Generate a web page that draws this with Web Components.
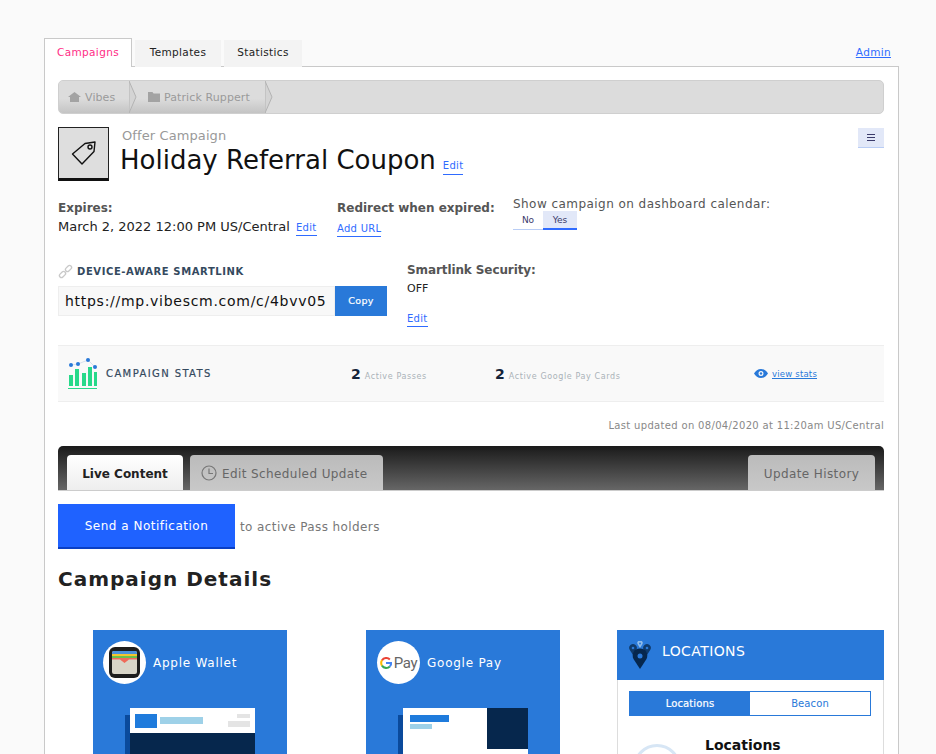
<!DOCTYPE html>
<html lang="en">
<head>
<meta charset="utf-8">
<title>Holiday Referral Coupon</title>
<style>
    html, body { margin: 0; height: 754px; overflow: hidden; }
    body { background: #fafafa; font-family: "DejaVu Sans", Verdana, sans-serif; color: #222; }
</style>
</head>
<body>
<vb-page>
    <vb-nav slot="nav"></vb-nav>
    <vb-breadcrumb></vb-breadcrumb>
    <vb-campaign-head title-text="Holiday Referral Coupon" kind="Offer Campaign"></vb-campaign-head>
    <vb-meta></vb-meta>
    <vb-smartlink></vb-smartlink>
    <vb-stats></vb-stats>
    <vb-updated>Last updated on 08/04/2020 at 11:20am US/Central</vb-updated>
    <vb-content-tabs></vb-content-tabs>
    <vb-notify></vb-notify>
    <vb-details>
        <vb-pass-card kind="apple" label="Apple Wallet"></vb-pass-card>
        <vb-pass-card kind="google" label="Google Pay"></vb-pass-card>
        <vb-locations></vb-locations>
    </vb-details>
</vb-page>

<script>
// small helper, every element has the same shadow setup
class VbBase extends HTMLElement {
    constructor() {
        super();
        this.attachShadow({ mode: 'open' });
    }
    connectedCallback() {
        this.render();
    }
}

const linkStyle = /* css */`
    .edit { color: #2f6bff; font-size: 10px; letter-spacing: .3px; text-decoration: none; border-bottom: 1px solid #2f6bff; padding-bottom: 2px; }
`;

class VbPage extends VbBase {
    render() {
        this.shadowRoot.innerHTML = /* html */`
        <style>
            :host { display: block; padding: 38px 37px 0 44px; }
            .panel { border: 1px solid #c9c9c9; background: #fff; padding: 13px 14px 0 13px; height: 700px; margin-top: -1px; box-sizing: border-box; width: 855px; }
        </style>
        <slot name="nav"></slot>
        <div class="panel"><slot></slot></div>
        `;
    }
}

class VbNav extends VbBase {
    render() {
        this.shadowRoot.innerHTML = /* html */`
        <style>
            :host { display: flex; align-items: flex-end; height: 29px; font-size: 10.500px; letter-spacing: .35px; position: relative; z-index: 1; }
            .tab { height: 27px; line-height: 25px; background: #f3f3f3; color: #222; text-align: center; box-sizing: border-box; }
            .on { height: 29px; line-height: 27px; width: 88px; background: #fff; color: #ff2d86; border: 1px solid #c9c9c9; border-bottom: 0; margin-right: 3px; }
            .t2 { width: 86px; margin-right: 3px; }
            .t3 { width: 78px; }
            a { margin-left: auto; margin-right: 8px; margin-bottom: 2px; align-self: center; color: #2f6bff; text-decoration: underline; }
        </style>
        <div class="tab on">Campaigns</div>
        <div class="tab t2">Templates</div>
        <div class="tab t3">Statistics</div>
        <a>Admin</a>
        `;
    }
}

class VbBreadcrumb extends VbBase {
    render() {
        this.shadowRoot.innerHTML = /* html */`
        <style>
            :host { display: flex; height: 34px; box-sizing: border-box; background: #dcdcdc; border: 1px solid #cfcfcf; border-radius: 5px; font-size: 11px; letter-spacing: .1px; color: #9a9a9a; overflow: hidden; }
            .crumb { position: relative; display: flex; align-items: center; gap: 4px; height: 100%; background: linear-gradient(#dcdcdc 55%, #c4c4c4); }
            .home { width: 71px; padding-left: 9px; box-sizing: border-box; }
            .folder { width: 136px; padding-left: 18px; box-sizing: border-box; }
            svg.arrow { position: absolute; right: -7px; top: 0; z-index: 1; }
            .crumb svg.i { flex: none; }
        </style>
        <div class="crumb home">
            <svg class="i" width="13" height="10" viewBox="0 0 13 10"><path fill="#a3a3a3" d="M6.500 0 13 5H11V10H2V5H0Z"/></svg>
            <span>Vibes</span>
            <svg class="arrow" width="8" height="32" viewBox="0 0 8 32"><path d="M0 0 7 16 0 32Z" fill="#d4d4d4" stroke="#b3b3b3"/></svg>
        </div>
        <div class="crumb folder">
            <svg class="i" width="12" height="10" viewBox="0 0 12 10"><path fill="#a3a3a3" d="M0 0H4.500L5.500 1.500H12V10H0Z"/></svg>
            <span>Patrick Ruppert</span>
            <svg class="arrow" width="8" height="32" viewBox="0 0 8 32"><path d="M0 0 7 16 0 32Z" fill="#d4d4d4" stroke="#b3b3b3"/></svg>
        </div>
        `;
    }
}

class VbCampaignHead extends VbBase {
    render() {
        this.shadowRoot.innerHTML = /* html */`
        <style>
            ${linkStyle}
            :host { display: flex; margin-top: 13px; height: 54px; }
            .box { width: 51px; height: 54px; box-sizing: border-box; background: #dedede; border: 1px solid #222; border-bottom: 3px solid #111; display: flex; align-items: center; justify-content: center; }
            .text { margin-left: 11px; }
            .kind { font-size: 13px; letter-spacing: .1px; color: #999; line-height: 16px; margin: 1px 0 0 2px; }
            .title { display: flex; align-items: baseline; line-height: 32px; }
            h1 { margin: 0; font-size: 26px; font-weight: 400; color: #111; }
            .edit { margin-left: 7px; line-height: 12px; }
            .menu { margin-left: auto; width: 26px; height: 19px; margin-top: 1px; background: #e2e8f8; border-bottom: 1px solid #b9cdf5; display: flex; align-items: center; justify-content: center; }
        </style>
        <div class="box">
            <svg width="26" height="26" viewBox="0 0 26 26" fill="none" stroke="#111" stroke-width="1.400" stroke-linejoin="round"><path d="M1.500 14 14 3.500 24 2 23 11.500 11 24Z"/><circle cx="19" cy="7" r="2"/></svg>
        </div>
        <div class="text">
            <div class="kind">${this.getAttribute('kind')}</div>
            <div class="title"><h1>${this.getAttribute('title-text')}</h1><a class="edit">Edit</a></div>
        </div>
        <div class="menu">
            <svg width="8" height="7" viewBox="0 0 8 7"><path d="M0 .5H8M0 3.500H8M0 6.500H8" stroke="#3a3a6a"/></svg>
        </div>
        `;
    }
}

class VbMeta extends VbBase {
    render() {
        this.shadowRoot.innerHTML = /* html */`
        <style>
            ${linkStyle}
            :host { display: grid; grid-template-columns: 279px 176px 1fr; margin-top: 18px; height: 46px; font-size: 12px; }
            .label { font-weight: 700; color: #555; line-height: 18px; }
            .val { color: #222; font-size: 13px; line-height: 18px; margin-top: 1px; white-space: nowrap; }
            .val .edit { margin-left: 2px; }
            .url { margin-top: 2px; line-height: 18px; }
            .cal { margin-top: -4px; }
            .cal .q { color: #555; line-height: 18px; letter-spacing: .45px; white-space: nowrap; }
            .toggle { display: flex; font-size: 9px; color: #3a3a6a; margin-top: -2px; }
            .toggle span { height: 19px; line-height: 18px; text-align: center; box-sizing: border-box; }
            .no { width: 30px; border-bottom: 1px solid #b9cdf5; }
            .yes { width: 34px; background: #e2e8f8; border-bottom: 2px solid #2f6bff; }
        </style>
        <div>
            <div class="label">Expires:</div>
            <div class="val">March 2, 2022 12:00 PM US/Central <a class="edit">Edit</a></div>
        </div>
        <div>
            <div class="label">Redirect when expired:</div>
            <div class="url"><a class="edit">Add URL</a></div>
        </div>
        <div class="cal">
            <div class="q">Show campaign on dashboard calendar:</div>
            <div class="toggle"><span class="no">No</span><span class="yes">Yes</span></div>
        </div>
        `;
    }
}

class VbSmartlink extends VbBase {
    render() {
        this.shadowRoot.innerHTML = /* html */`
        <style>
            ${linkStyle}
            :host { display: grid; grid-template-columns: 349px 1fr; margin-top: 17px; height: 81px; }
            .head { display: flex; align-items: center; gap: 4px; height: 18px; font-size: 10px; font-weight: 700; letter-spacing: .6px; color: #34495e; }
            .row { display: flex; height: 30px; margin-top: 6px; width: 329px; }
            .url { width: 277px; box-sizing: border-box; background: #f8f8f8; border: 1px solid #eee; font-size: 14px; letter-spacing: .72px; line-height: 28px; padding-left: 6px; color: #111; overflow: hidden; white-space: nowrap; }
            .copy { width: 52px; background: #2979d9; color: #fff; font-size: 9.500px; text-align: center; line-height: 30px; letter-spacing: .3px; -webkit-text-stroke: .2px #fff; }
            .sec { font-size: 12px; }
            .label { font-weight: 700; color: #555; line-height: 18px; margin-top: -1px; letter-spacing: -.1px; }
            .off { color: #222; line-height: 18px; font-size: 11px; margin-top: 1px; }
            .e { margin-top: 12px; line-height: 16px; }
        </style>
        <div>
            <div class="head">
                <svg width="15" height="15" viewBox="0 0 15 15" fill="none" stroke="#c9c9c9" stroke-width="1.300"><rect x="-3.500" y="-2" width="7" height="4" rx="2" transform="translate(4.500 10.500) rotate(-45)"/><rect x="-3.500" y="-2" width="7" height="4" rx="2" transform="translate(10.500 4.500) rotate(-45)"/></svg>
                <span>DEVICE-AWARE SMARTLINK</span>
            </div>
            <div class="row">
                <div class="url">https://mp.vibescm.com/c/4bvv05</div>
                <div class="copy">Copy</div>
            </div>
        </div>
        <div class="sec">
            <div class="label">Smartlink Security:</div>
            <div class="off">OFF</div>
            <div class="e"><a class="edit">Edit</a></div>
        </div>
        `;
    }
}

class VbStats extends VbBase {
    render() {
        this.shadowRoot.innerHTML = /* html */`
        <style>
            :host { display: flex; align-items: center; height: 57px; box-sizing: border-box; margin-top: 2px; background: #f9f9f9; border-top: 1px solid #eee; border-bottom: 1px solid #eee; padding-left: 10px; }
            .title { font-size: 10px; letter-spacing: 1.400px; color: #34495e; margin-left: 8px; width: 245px; -webkit-text-stroke: .2px #34495e; white-space: nowrap; }
            .stat { display: flex; align-items: baseline; gap: 4px; font-size: 8px; letter-spacing: .62px; color: #aab2b8; }
            .stat b { font-size: 14px; color: #14233a; letter-spacing: 0; }
            .s1 { width: 144px; }
            .s2 { width: 259px; }
            .view { display: flex; align-items: center; gap: 4px; color: #2979d9; font-size: 8.500px; text-decoration: underline; letter-spacing: .2px; }
        </style>
        <svg width="30" height="32" viewBox="0 0 30 32">
            <g fill="#27d98a"><rect x="1" y="17" width="4" height="11"/><rect x="7" y="11" width="4" height="17"/><rect x="14" y="15" width="4" height="13"/><rect x="20" y="9" width="4" height="19"/><rect x="26" y="14" width="3" height="14"/><rect x="0" y="30" width="29" height="1"/></g>
            <path d="M3 7 10 6 20 2 27 9" fill="none" stroke="#c9d6e8" stroke-width=".7"/>
            <g fill="#2979d9"><circle cx="3" cy="7" r="2"/><circle cx="10" cy="6" r="2"/><circle cx="20" cy="2" r="2"/><circle cx="27" cy="9" r="2"/></g>
        </svg>
        <div class="title">CAMPAIGN STATS</div>
        <div class="stat s1"><b>2</b> Active Passes</div>
        <div class="stat s2"><b>2</b> Active Google Pay Cards</div>
        <a class="view">
            <svg width="14" height="9" viewBox="0 0 14 9"><path fill="#2979d9" fill-rule="evenodd" d="M7 0C10 0 12.500 2 14 4.500 12.500 7 10 9 7 9S1.500 7 0 4.500C1.500 2 4 0 7 0ZM7 2A2.500 2.500 0 1 0 7 7 2.500 2.500 0 1 0 7 2Z"/><circle cx="7" cy="4.500" r="1.200" fill="#2979d9"/></svg>
            <span>view stats</span>
        </a>
        `;
    }
}

class VbUpdated extends VbBase {
    render() {
        this.shadowRoot.innerHTML = /* html */`
        <style>
            :host { display: block; text-align: right; font-size: 10px; letter-spacing: .33px; color: #888; line-height: 14px; margin-top: 17px; height: 27px; }
        </style>
        <slot></slot>
        `;
    }
}

class VbContentTabs extends VbBase {
    render() {
        this.shadowRoot.innerHTML = /* html */`
        <style>
            :host { display: flex; height: 45px; box-sizing: border-box; padding: 9px 9px 0 9px; background: linear-gradient(#1a1a1a, #666); border-radius: 5px 5px 0 0; border-bottom: 1px solid #ccc; font-size: 12px; letter-spacing: .4px; }
            div { display: flex; align-items: center; justify-content: center; gap: 5px; border-radius: 4px 4px 0 0; color: #666; background: linear-gradient(#bbb, #c8c8c8); height: 35px; padding-top: 3px; box-sizing: border-box; }
            .live { width: 116px; background: linear-gradient(#fff, #eee); color: #222; font-weight: 700; letter-spacing: 0; }
            .sched { width: 193px; margin-left: 7px; justify-content: flex-start; padding-left: 11px; }
            .sched svg { margin-top: -3px; }
            .hist { width: 127px; margin-left: auto; }
        </style>
        <div class="live">Live Content</div>
        <div class="sched">
            <svg width="16" height="16" viewBox="0 0 16 16" fill="none" stroke="#777" stroke-width="1.200"><circle cx="8" cy="8" r="7"/><path d="M8 3.500V8.500H12"/></svg>
            <span>Edit Scheduled Update</span>
        </div>
        <div class="hist">Update History</div>
        `;
    }
}

class VbNotify extends VbBase {
    render() {
        this.shadowRoot.innerHTML = /* html */`
        <style>
            :host { display: flex; align-items: center; margin-top: 13px; height: 45px; font-size: 12px; color: #777; letter-spacing: .4px; }
            button { width: 177px; height: 45px; border: 0; border-bottom: 2px solid #0a3fc4; background: #1f62ff; color: #fff; font: inherit; letter-spacing: .5px; margin-right: 5px; padding: 1px 0 0; }
            span { padding-top: 1px; }
        </style>
        <button>Send a Notification</button>
        <span>to active Pass holders</span>
        `;
    }
}

class VbDetails extends VbBase {
    render() {
        this.shadowRoot.innerHTML = /* html */`
        <style>
            :host { display: block; margin-top: 16px; }
            h2 { margin: 0; font-size: 20px; line-height: 28px; font-weight: 700; letter-spacing: 1px; color: #222; }
            .row { display: flex; margin-top: 37px; padding-left: 35px; }
            ::slotted(vb-pass-card) { margin-right: 79px; }
            ::slotted(vb-locations) { margin-left: -22px; }
        </style>
        <h2>Campaign Details</h2>
        <div class="row"><slot></slot></div>
        `;
    }
}

class VbPassCard extends VbBase {
    render() {
        const apple = this.getAttribute('kind') === 'apple';
        const logo = apple ? /* html */`
            <svg width="35" height="35" viewBox="0 0 35 35">
                <rect x="2" y="2" width="31" height="31" rx="6" fill="#1d1d1d"/>
                <rect x="5" y="6" width="25" height="23" rx="2" fill="#d8d5c8"/>
                <path d="M5 9V8a2 2 0 0 1 2-2H28a2 2 0 0 1 2 2V9Z" fill="#4a90d9"/>
                <rect x="5" y="9" width="25" height="2" fill="#f4c430"/>
                <rect x="5" y="11" width="25" height="2" fill="#6cc04a"/>
                <path d="M5 13H30V14.500H22L17.500 18 13 14.500H5Z" fill="#ef6a5a"/>
            </svg>` : /* html */`
            <span class="gp">
                <svg width="12" height="12" viewBox="0 0 14 14" fill="none" stroke-width="2.400">
                    <path d="M11.500 2.900A6 6 0 0 0 2.300 3.900" stroke="#ea4335"/>
                    <path d="M2.300 3.900A6 6 0 0 0 2.300 10.100" stroke="#fbbc05"/>
                    <path d="M2.300 10.100A6 6 0 0 0 11.500 11" stroke="#34a853"/>
                    <path d="M11.500 11A6 6 0 0 0 13 7H7" stroke="#4285f4"/>
                </svg>
                <span>Pay</span>
            </span>`;
        const preview = apple ? /* html */`
            <div class="back"></div>
            <div class="pass">
                <div class="top">
                    <i class="sq"></i><i class="bar"></i>
                    <span class="meta"><i class="m1"></i><i class="m2"></i></span>
                </div>
                <div class="dark"></div>
            </div>` : /* html */`
            <div class="back"></div>
            <div class="pass gpass">
                <div class="gtop">
                    <div class="gleft"><i class="g1"></i><i class="g2"></i></div>
                    <div class="gdark"></div>
                </div>
            </div>`;
        this.shadowRoot.innerHTML = /* html */`
        <style>
            :host { display: block; flex: none; width: 194px; height: 300px; background: #2979d9; }
            .head { display: flex; align-items: center; gap: 7px; padding: 11px 0 0 ${apple ? 10 : 11}px; font-size: 12px; letter-spacing: .75px; color: #fff; }
            .circle { width: 43px; height: 43px; border-radius: 50%; background: #fff; display: flex; align-items: center; justify-content: center; flex: none; }
            .gp { display: flex; align-items: center; gap: 2px; color: #666; font-family: "Roboto", sans-serif; font-size: 15px; letter-spacing: -.3px; }
            .preview { display: flex; margin: 24px 0 0 32px; height: 300px; }
            .back { width: 5px; margin-top: 7px; background: #0a4a9c; }
            .pass { width: 125px; background: #fff; }
            .top { display: flex; align-items: center; height: 25px; padding-left: 5px; box-sizing: border-box; }
            i { display: block; }
            .sq { width: 22px; height: 14px; background: #1f7bdc; }
            .bar { width: 43px; height: 7px; background: #9ed1e8; margin-left: 3px; }
            .meta { display: flex; flex-direction: column; align-items: flex-end; gap: 3px; margin-left: auto; margin-right: 5px; }
            .m1 { width: 13px; height: 4px; background: #e4e4e4; }
            .m2 { width: 22px; height: 6px; background: #e4e4e4; }
            .dark { background: #06274d; height: 275px; }
            .gtop { display: flex; height: 41px; }
            .gleft { flex: 1; padding: 7px 0 0 7px; }
            .g1 { width: 39px; height: 7px; background: #1f7bdc; }
            .g2 { width: 22px; height: 5px; background: #9ed1e8; margin-top: 2px; }
            .gdark { width: 41px; background: #06274d; }
        </style>
        <div class="head"><div class="circle">${logo}</div><span>${this.getAttribute('label')}</span></div>
        <div class="preview">${preview}</div>
        `;
    }
}

class VbLocations extends VbBase {
    render() {
        this.shadowRoot.innerHTML = /* html */`
        <style>
            :host { display: block; flex: none; width: 267px; box-sizing: border-box; border: 1px solid #ddd; border-top: 0; height: 300px; }
            .head { display: flex; align-items: center; height: 50px; background: #2979d9; margin: 0 -1px; color: #fff; font-size: 14px; letter-spacing: .4px; padding: 0 0 0 12px; gap: 11px; }
            .head span { margin-top: -9px; }
            .seg { display: flex; margin: 11px 12px 0 11px; height: 25px; border: 1px solid #2979d9; box-sizing: border-box; font-size: 10px; letter-spacing: .1px; }
            .seg div { flex: 1; text-align: center; line-height: 23px; }
            .a { background: #2979d9; color: #fff; -webkit-text-stroke: .2px #fff; }
            .b { color: #2979d9; }
            .body { display: flex; margin: 19px 0 0 15px; }
            h3 { margin: 0 0 0 24px; font-size: 14px; line-height: 20px; font-weight: 700; color: #111; }
            .ring { width: 48px; height: 48px; border-radius: 50%; border: 3px solid #d7e6f5; box-sizing: border-box; margin-top: 9px; }
        </style>
        <div class="head">
            <svg width="22" height="28" viewBox="0 0 22 28">
                <g fill="#0f3a6b"><path d="M4 14 .8 9A3.800 3.800 0 1 1 7.200 9Z"/><path d="M18 14 14.800 9A3.800 3.800 0 1 1 21.200 9Z"/></g>
                <path d="M11 7 8.800 3.500A2.700 2.700 0 1 1 13.200 3.500Z" fill="#8fbbe8"/>
                <path d="M11 28 4.500 18A7.300 7.300 0 1 1 17.500 18Z" fill="#06274d"/>
                <circle cx="4" cy="7" r="1.300" fill="#2979d9"/><circle cx="18" cy="7" r="1.300" fill="#2979d9"/><circle cx="11" cy="2.600" r="1" fill="#2979d9"/>
                <circle cx="11" cy="15" r="2.500" fill="#2979d9"/>
            </svg>
            <span>LOCATIONS</span>
        </div>
        <div class="seg"><div class="a">Locations</div><div class="b">Beacon</div></div>
        <div class="body"><div class="ring"></div><h3>Locations</h3></div>
        `;
    }
}

customElements.define('vb-page', VbPage);
customElements.define('vb-nav', VbNav);
customElements.define('vb-breadcrumb', VbBreadcrumb);
customElements.define('vb-campaign-head', VbCampaignHead);
customElements.define('vb-meta', VbMeta);
customElements.define('vb-smartlink', VbSmartlink);
customElements.define('vb-stats', VbStats);
customElements.define('vb-updated', VbUpdated);
customElements.define('vb-content-tabs', VbContentTabs);
customElements.define('vb-notify', VbNotify);
customElements.define('vb-details', VbDetails);
customElements.define('vb-pass-card', VbPassCard);
customElements.define('vb-locations', VbLocations);
</script>
</body>
</html>
